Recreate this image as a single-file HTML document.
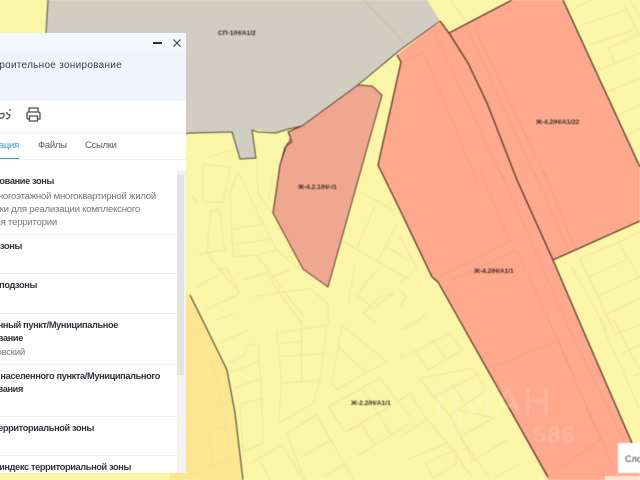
<!DOCTYPE html>
<html lang="ru"><head><meta charset="utf-8"><style>
html,body{margin:0;padding:0;width:640px;height:480px;overflow:hidden;background:#fbf5a8}
body{position:relative;font-family:"Liberation Sans","DejaVu Sans",sans-serif}
svg.map{position:absolute;left:0;top:0;filter:blur(.45px)}
.y path{fill:none;stroke:#f1e199;stroke-width:2.4}
.s path{fill:none;stroke:#f49d84;stroke-width:2.5}
.lbl{font:bold 6.6px "Liberation Sans",sans-serif;fill:#332a22}
#panel{position:absolute;left:-2px;top:33px;width:188px;height:440px;background:#fff;overflow:hidden;filter:blur(.3px)}
.t{position:absolute;white-space:nowrap;right:auto;font-size:9.6px;line-height:12px;color:#777;letter-spacing:-.24px}
.b{font-weight:bold;color:#33333d;font-size:9.2px;letter-spacing:-.35px}
.d{position:absolute;left:0;width:179px;height:1px;background:#eeeef0}
</style></head><body>
<svg class="map" width="640" height="480" viewBox="0 0 640 480">
<rect width="640" height="480" fill="#fbf5a8"/>
<path d="M186 292L190 295L205 325L227 370L235 413L243 480H170V292Z" fill="#fce68f"/>
<path d="M48 0H427L440 21L400 50L358 85L302 126L285 130L276 133L258 130L252 130L256 158L240 159L232 132L190 133L150 140H46V33Z" fill="#d2cdc2"/>
<path d="M48 0L46 33M186 133.500L190 133L232 132L240 159L256 158L252 130L258 132L276 133L285 130L302 126L312 124L358 85L400 50L440 21" fill="none" stroke="#4c4a3a" stroke-width="1"/>
<path d="M190 295L205 325L227 370L235 413L243 480" fill="none" stroke="#45473a" stroke-width="1.100"/>
<path d="M364 0L405 44" stroke="#d9b9a5" fill="none"/>
<path d="M358 85L372 86L382 95L328 287L303 269L273 213L280 165L287 144Q293 140 288 132L302 126Z" fill="#f0a78f" stroke="#5d3e30" stroke-width="1" stroke-linejoin="round"/>
<path d="M288 132L292 142L285 147L280 165L273 213" fill="none" stroke="#5d3e30" stroke-width="1"/>
<path d="M440 21L449 33L468 63L487 103L517 180L553 260L583 330L632 443L650 480H548L460 320L438 282L432 277L400 210L378 165L401 62L397 55Z" fill="#fea98e"/>
<path d="M449 33L512 0H563L640 167V221L553 260L517 180L487 103L468 63Z" fill="#fea98e"/>
<g class="y" transform="translate(190 160) scale(.3333)">
<path d="M40 12L120 22L100 128L40 125ZM145 35L120 95L125 230L130 290L200 285L260 270M145 35L215 185L260 270L330 330M125 208L215 192M128 255L240 237M63 152L88 150L105 270L50 280ZM25 285L75 272M50 280L150 400M85 330L110 325M20 380L85 345M45 450L130 410M110 325L150 400L125 415M200 285L290 405L340 465M155 360L230 340M240 352L300 330M190 410L360 385M230 340L270 400L335 490M415 495L415 435L360 385M510 95L610 150M555 140L500 265M580 145L610 120M620 195L565 300M590 260L660 305M460 245L660 360M495 310L475 430M555 335L500 405L550 445L610 400L570 410L520 460L560 490M200 0L205 100L250 165M235 115L250 50M0 100L25 130M55 -10L130 -30"/>
</g>
<g class="y" transform="translate(190 320) scale(.3333)">
<path d="M0 155L70 140M5 260L95 240M0 318L110 325M55 330L70 435M0 400L55 370M0 465L135 410M0 40L25 25M70 140L95 240L115 350L120 420M20 30L70 140M85 70L175 30M115 130L165 105L170 80L200 70M125 155L210 125M135 205L210 175M145 255L215 235M205 70L215 235L220 370L160 395L150 260M270 70L330 65M265 40L410 15M270 110L410 100M275 190L385 180M335 0L335 185M260 30L275 190L265 310L370 250L390 180L410 20M445 80L425 190L440 208L590 125L455 15L445 80M445 80L525 155M415 260L570 175L660 290M415 260L465 335L600 260M520 210L605 345M470 335L515 315L555 375M505 405L660 310M290 340L380 285L490 480M290 340L345 480M335 410L425 360M400 470L470 430M180 430L275 375L340 480M210 425L240 480M80 0L130 -20"/>
</g>
<g class="y" transform="translate(400 320) scale(.3333)">
<path d="M0 30L50 0M0 100L5 115L150 40L185 90L85 150L50 100M100 60L135 115M60 175L220 145L260 210L150 285L100 230M60 175L100 230M155 190L190 245M170 270L285 295M100 230L240 160M180 350L290 290M150 285L220 420M215 425L320 360M180 350L265 470M0 350L80 300M0 240L30 220M30 220L75 290L150 380L215 470M20 420L140 370M75 430L165 390L170 430L100 475M75 430L100 475M280 475L355 435M600 0L720 270M640 45L720 15M665 100L720 75M695 170L720 160M640 0L720 150"/>
</g>
<g class="y" transform="translate(400 170) scale(.3333)">
<path d="M0 195L50 295L0 335M0 360L20 380L0 410M80 430L20 480M540 265L660 215L720 185M540 265L640 480M565 320L680 270M590 380L720 320M615 435L720 385M655 215L720 325M515 290L620 480"/>
</g>
<g class="y" transform="translate(400 0) scale(.3333)">
<path d="M525 20L580 0M545 75L680 30M570 135L700 90M625 145L710 105M625 145L645 190L720 160M595 210L720 160M625 275L720 235M655 345L720 315M680 405L720 385M690 0L720 50M670 10L720 110M150 0L200 65"/>
</g>
<g class="s" transform="translate(400 170) scale(.3333)">
<path d="M240 0L330 215L110 325M350 240L140 335M350 240L460 480M300 0L510 480M400 0L510 250M430 0L525 235"/>
</g>
<g class="s" transform="translate(400 0) scale(.3333)">
<path d="M0 190L70 155L230 540M100 90L310 540M205 90L410 540M220 75L440 540"/>
</g>
<g class="s" transform="translate(400 320) scale(.3333)">
<path d="M270 145L475 60L600 360L450 465M445 0L640 440M495 0L690 400"/>
</g>
<path d="M397 55L401 62L378 165L400 210L432 277L438 282L465 330L548 477M440 21L449 33L468 63L487 103L517 180L553 260L583 330L632 443L650 480M449 33L512 0M563 0L640 167M553 260L640 221" fill="none" stroke="#4a3020" stroke-width="1.200"/>
<text x="218" y="35" class="lbl">СП-1/Н/А1/2</text>
<text x="536" y="124" class="lbl">Ж-4.2/Н/А1/22</text>
<text x="298" y="189" class="lbl">Ж-4.2.1/Н/-/1</text>
<text x="474" y="273" class="lbl">Ж-4.2/Н/А1/1</text>
<text x="351" y="405" class="lbl">Ж-2.2/Н/А1/1</text>
<text x="553" y="415" text-anchor="end" font-family="Liberation Sans" font-size="39" letter-spacing="2" fill="#fff" fill-opacity=".14">ЦИАН</text>
<text x="576" y="443" text-anchor="end" font-family="Liberation Sans" font-weight="bold" font-size="24" letter-spacing="1" fill="#fff" fill-opacity=".13">586</text>
<rect x="618" y="443" width="22" height="30" fill="#fff"/>
<rect x="605" y="476" width="35" height="4" fill="#fbe3d8"/>
<text x="625" y="462" font-family="Liberation Sans" font-size="9" fill="#333">Слои</text>
</svg>
<div id="panel">
<div style="position:absolute;left:0;top:0;width:188px;height:20px;background:#f4f7fd"></div>
<div style="position:absolute;left:0;top:20px;width:188px;height:47px;background:#eff3fb"></div>
<div class="t" style="right:64px;top:27px;font-size:10px;color:#3d3d46;letter-spacing:.28px">Градостроительное зонирование</div>
<div style="position:absolute;left:155px;top:9px;width:9px;height:1.500px;background:#30323a"></div>
<svg style="position:absolute;left:174px;top:5px" width="10" height="10" viewBox="0 0 10 10"><path d="M1.500 1.500L8.500 8.500M8.500 1.500L1.500 8.500" stroke="#3a3c44" stroke-width="1.100"/></svg>
<svg style="position:absolute;left:0;top:72px" width="50" height="20" viewBox="0 0 50 20" fill="none" stroke="#4a4e56" stroke-width="1.300"><path d="M2 9Q7 7 6 11Q4 14 2 13M8 14Q12 13 12 10Q8 9 9 7M11 5h2"/><path d="M31 7V3H40V7M29 14H31.500M39.500 14H42V8.500Q42 7 40.500 7H30.500Q29 7 29 8.500V14M31.500 11H39.500V16H31.500Z"/></svg>
<div class="t" style="right:167px;top:107px;color:#3d9ad2;font-size:9.5px">Информация</div>
<div class="t" style="left:40px;top:107px;color:#5a5a62;font-size:9.5px;letter-spacing:-.3px">Файлы</div>
<div class="t" style="left:87px;top:107px;color:#5a5a62;font-size:9.5px;letter-spacing:-.3px">Ссылки</div>
<div style="position:absolute;left:0;top:125px;width:21px;height:1.500px;background:#3d9ad2"></div>
<div style="position:absolute;left:0;top:126px;width:188px;height:1px;background:#f0f0f2"></div>
<div style="position:absolute;left:0;top:67px;width:188px;height:1px;background:#f6f6f8"></div>
<div style="position:absolute;left:0;top:99px;width:188px;height:1px;background:#f6f6f8"></div>
<div style="position:absolute;left:179px;top:137px;width:9px;height:303px;background:#f3f3f3"></div>
<div style="position:absolute;left:179px;top:142px;width:7px;height:200px;background:#e2e2e0"></div>

<div class="t b" style="right:132px;top:142px">Наименование зоны</div>
<div class="t" style="right:30px;top:158px">Для многоэтажной многоквартирной жилой</div>
<div class="t" style="right:46px;top:171px">застройки для реализации комплексного</div>
<div class="t" style="right:129px;top:184px">развития территории</div>
<div class="d" style="top:201px"></div>
<div class="t b" style="right:164px;top:207px">Код зоны</div>
<div class="d" style="top:240px"></div>
<div class="t b" style="right:149px;top:246px">Код подзоны</div>
<div class="d" style="top:280px"></div>
<div class="t b" style="right:68px;top:286px">Населенный пункт/Муниципальное</div>
<div class="t b" style="right:163px;top:299px">образование</div>
<div class="t" style="right:161px;top:314px">Чайковский</div>
<div class="d" style="top:331px"></div>
<div class="t b" style="right:26px;top:337px">Код населенного пункта/Муниципального</div>
<div class="t b" style="right:163px;top:350px">образования</div>
<div class="d" style="top:383px"></div>
<div class="t b" style="right:92px;top:389px">Индекс территориальной зоны</div>
<div class="d" style="top:422px"></div>
<div class="t b" style="right:55px;top:428px">Полный индекс территориальной зоны</div>
</div>
</body></html>
